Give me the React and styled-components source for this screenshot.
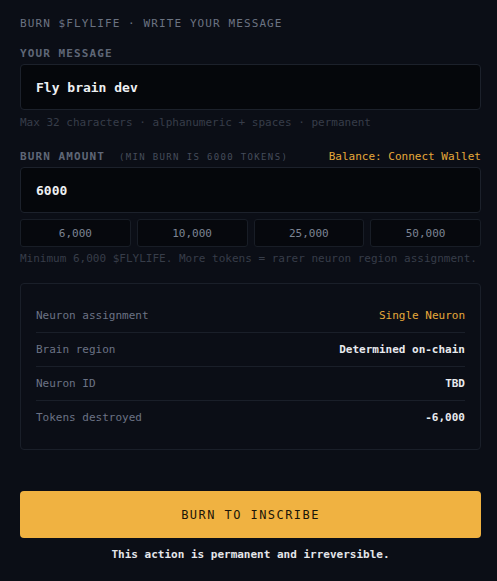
import React, { useState } from "react";
import styled, { createGlobalStyle } from "styled-components";

const Global = createGlobalStyle`
  html, body { margin: 0; padding: 0; background: #0b0e16; }
  body { font-family: "DejaVu Sans Mono", "Liberation Mono", monospace; }
  * { box-sizing: border-box; }
`;

const Panel = styled.div`
  width: 497px;
  min-height: 581px;
  padding: 16px 16px 20px 20px;
  background: #0b0e16;
  display: flex;
  flex-direction: column;
`;

const Heading = styled.div`
  font-size: 11px;
  line-height: 16px;
  letter-spacing: 0.1em;
  color: #6b7382;
  text-transform: uppercase;
`;

const Field = styled.div`
  display: flex;
  flex-direction: column;
  margin-top: ${(p) => p.$top}px;
`;

const LabelRow = styled.div`
  display: flex;
  align-items: baseline;
  justify-content: space-between;
  line-height: 16px;
  margin-bottom: 2px;
`;

const Label = styled.span`
  font-size: 11px;
  font-weight: bold;
  letter-spacing: 0.1em;
  color: #5f6777;
  text-transform: uppercase;
`;

const SubLabel = styled.span`
  font-size: 9px;
  letter-spacing: 0.15em;
  color: #454c5a;
  margin-left: 14px;
  text-transform: uppercase;
`;

const Balance = styled.span`
  font-size: 11px;
  color: #e6a93a;
`;

const Input = styled.input`
  width: 461px;
  height: 46px;
  padding: 0 15px;
  background: #05070b;
  border: 1px solid #1c212b;
  border-radius: 4px;
  color: #eef0f3;
  font-family: inherit;
  font-size: 13px;
  font-weight: bold;
  outline: none;
`;

const Hint = styled.div`
  font-size: 11px;
  line-height: 16px;
  color: #373d49;
  margin-top: ${(p) => p.$top}px;
`;

const Presets = styled.div`
  display: grid;
  grid-template-columns: repeat(4, 1fr);
  gap: 6px;
  width: 461px;
  margin-top: 6px;
`;

const Preset = styled.button`
  height: 28px;
  background: #06080d;
  border: 1px solid #181d26;
  border-radius: 3px;
  color: #7c8493;
  font-family: inherit;
  font-size: 11px;
  padding: 0;
`;

const Summary = styled.div`
  width: 461px;
  margin-top: 16px;
  padding: 15px 15px;
  border: 1px solid #1a1f29;
  border-radius: 4px;
  display: flex;
  flex-direction: column;
`;

const Row = styled.div`
  display: flex;
  justify-content: space-between;
  align-items: center;
  height: ${(p) => (p.$first ? 33 : 34)}px;
  border-top: ${(p) => (p.$first ? "none" : "1px solid #1a1f29")};
  font-size: 11px;
`;

const RowLabel = styled.span`
  color: #6b7385;
`;

const RowValue = styled.span`
  color: ${(p) => (p.$accent ? "#e6a93a" : "#e8eaee")};
  font-weight: ${(p) => (p.$accent ? "normal" : "bold")};
`;

const BurnButton = styled.button`
  width: 461px;
  height: 47px;
  margin-top: 41px;
  background: #f0b241;
  border: none;
  border-radius: 4px;
  color: #1a1508;
  font-family: inherit;
  font-size: 12px;
  letter-spacing: 0.12em;
  text-transform: uppercase;
`;

const Footnote = styled.div`
  width: 461px;
  margin-top: 9px;
  text-align: center;
  font-size: 11px;
  line-height: 16px;
  font-weight: bold;
  color: #e4e6ea;
`;

const rows = [
  { label: "Neuron assignment", value: "Single Neuron", accent: true },
  { label: "Brain region", value: "Determined on-chain" },
  { label: "Neuron ID", value: "TBD" },
  { label: "Tokens destroyed", value: "-6,000" },
];

const presets = ["6,000", "10,000", "25,000", "50,000"];

export default function App() {
  const [message, setMessage] = useState("Fly brain dev");
  const [amount, setAmount] = useState("6000");

  return (
    <>
      <Global />
      <Panel>
        <Heading>Burn $FLYLIFE · Write your message</Heading>

        <Field $top={14}>
          <LabelRow>
            <Label>Your message</Label>
          </LabelRow>
          <Input value={message} maxLength={32} onChange={(e) => setMessage(e.target.value)} />
        </Field>
        <Hint $top={5}>Max 32 characters · alphanumeric + spaces · permanent</Hint>

        <Field $top={16}>
          <LabelRow>
            <span>
              <Label>Burn amount</Label>
              <SubLabel>(min burn is 6000 tokens)</SubLabel>
            </span>
            <Balance>Balance: Connect Wallet</Balance>
          </LabelRow>
          <Input value={amount} onChange={(e) => setAmount(e.target.value)} />
        </Field>
        <Presets>
          {presets.map((p) => (
            <Preset key={p} onClick={() => setAmount(p.replace(/,/g, ""))}>
              {p}
            </Preset>
          ))}
        </Presets>
        <Hint $top={4}>Minimum 6,000 $FLYLIFE. More tokens = rarer neuron region assignment.</Hint>

        <Summary>
          {rows.map((r, i) => (
            <Row key={r.label} $first={i === 0}>
              <RowLabel>{r.label}</RowLabel>
              <RowValue $accent={r.accent}>{r.value}</RowValue>
            </Row>
          ))}
        </Summary>

        <BurnButton>Burn to inscribe</BurnButton>
        <Footnote>This action is permanent and irreversible.</Footnote>
      </Panel>
    </>
  );
}
